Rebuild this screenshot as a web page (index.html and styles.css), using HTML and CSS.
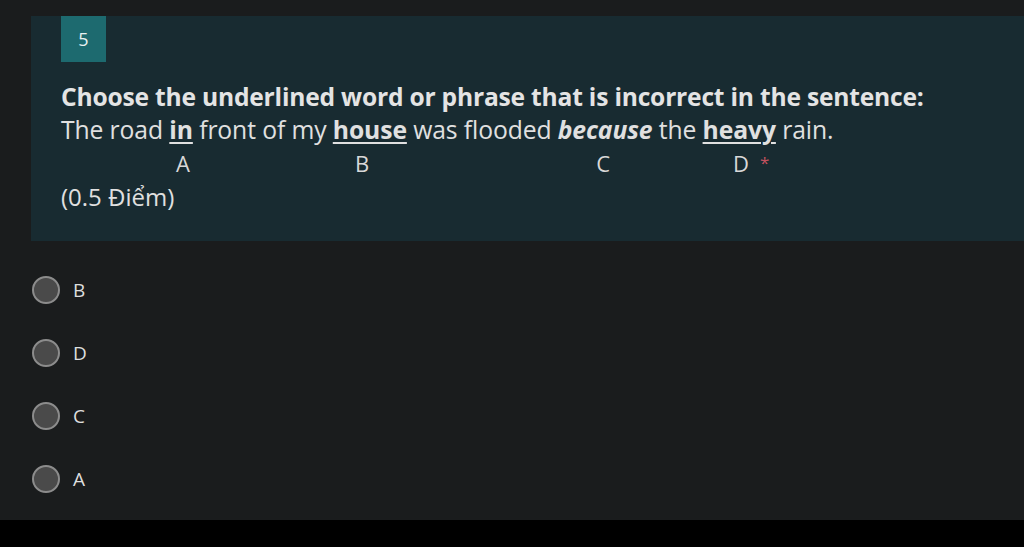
FILE: index.html
```html
<!DOCTYPE html>
<html>
<head>
<meta charset="utf-8">
<link rel="stylesheet" href="styles.css">
</head>
<body>
<div class="screen">
  <section class="question">
    <div class="num">5</div>
    <div class="title">Choose the underlined word or phrase that is incorrect in the sentence:</div>
    <div class="sentence">The road <b><u>in</u></b> front of my <b><u>house</u></b> was flooded <b><i>because</i></b> the <b><u>heavy</u></b> rain.</div>
    <div class="letters"><span class="la">A</span><span class="lb">B</span><span class="lc">C</span><span class="ld">D</span><span class="req">*</span></div>
    <div class="points">(0.5 Điểm)</div>
  </section>
  <ul class="options">
    <li><span class="radio"></span><span class="lbl">B</span></li>
    <li><span class="radio"></span><span class="lbl">D</span></li>
    <li><span class="radio"></span><span class="lbl">C</span></li>
    <li><span class="radio"></span><span class="lbl">A</span></li>
  </ul>
</div>
<div class="bottom"></div>
</body>
</html>
```
FILE: styles.css
```css
html, body {
  margin: 0;
  padding: 0;
  background: #1a1c1d;
  width: 1024px;
  height: 547px;
  overflow: hidden;
  font-family: "Open Sans", "Noto Sans", sans-serif;
}
.screen {
  height: 520px;
  padding-top: 16px;
  box-sizing: border-box;
}
.question {
  margin-left: 31px;
  height: 225px;
  background: #182b31;
  padding-left: 30px;
  color: #e2e2e2;
}
.num {
  width: 45px;
  height: 46px;
  background: #1d6a6f;
  color: #e8f2f2;
  font-size: 18px;
  display: flex;
  align-items: center;
  justify-content: center;
}
.title {
  margin-top: 18px;
  font-size: 24.6px;
  font-weight: 700;
  line-height: 34px;
  letter-spacing: -0.2px;
  white-space: nowrap;
  color: #e4e4e4;
}
.sentence {
  font-size: 24.7px;
  line-height: 32px;
  letter-spacing: -0.1px;
  white-space: nowrap;
  color: #e0e0e0;
}
.sentence u { text-decoration-thickness: 2px; text-underline-offset: 3px; }
.letters {
  display: flex;
  font-size: 22px;
  line-height: 34px;
  color: #d8d8d8;
}
.la { margin-left: 115px; }
.lb { margin-left: 165px; }
.lc { margin-left: 227px; }
.ld { margin-left: 123px; }
.req { color: #c2525f; font-size: 17px; margin-left: 11px; }
.points {
  font-size: 24px;
  line-height: 34px;
  color: #e0e0e0;
}
.options {
  list-style: none;
  margin: 0;
  padding: 35px 0 0 32px;
  display: flex;
  flex-direction: column;
  gap: 35px;
}
.options li {
  display: flex;
  align-items: center;
  height: 28px;
}
.radio {
  width: 24px;
  height: 24px;
  border: 2px solid #8c8c8c;
  border-radius: 50%;
  background: #4a4a4a;
}
.lbl {
  margin-left: 13px;
  font-size: 19px;
  font-weight: 500;
  color: #dedede;
}
.bottom {
  height: 27px;
  background: #000;
}
```
